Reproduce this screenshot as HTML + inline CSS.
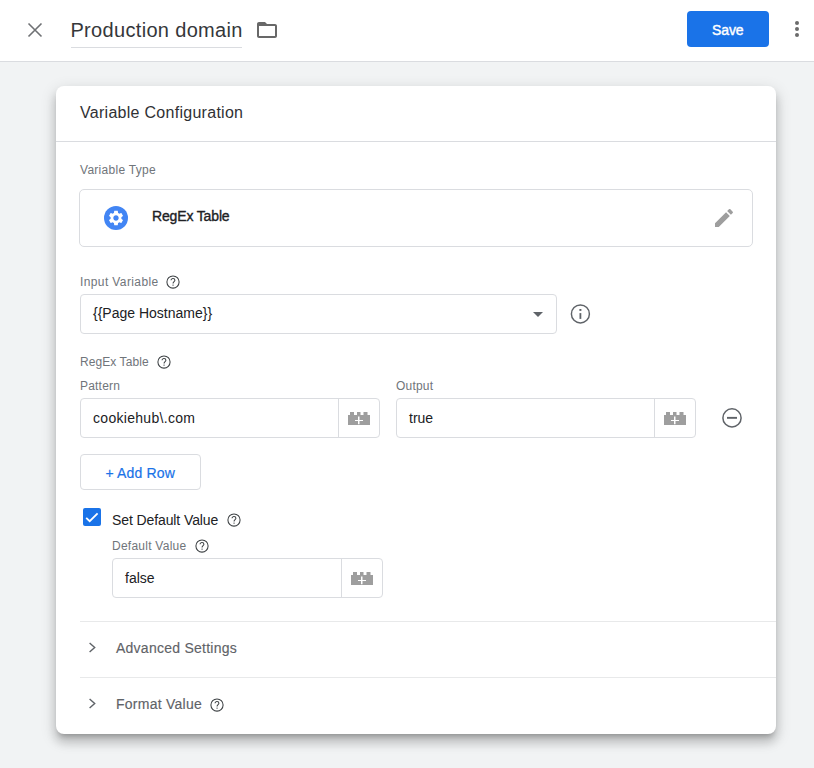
<!DOCTYPE html>
<html><head><meta charset="utf-8">
<style>
*{box-sizing:border-box;margin:0;padding:0}
html,body{width:814px;height:768px;overflow:hidden;background:#f1f3f4;font-family:"Liberation Sans",sans-serif;color:#202124}
.abs{position:absolute}
#hdr{position:absolute;left:0;top:0;width:814px;height:62px;background:#fff;border-bottom:1px solid #dadce0}
#card{position:absolute;left:56px;top:86px;width:720px;height:648px;background:#fff;border-radius:8px;box-shadow:0 5px 5px -3px rgba(0,0,0,.22),0 8px 10px 1px rgba(0,0,0,.14),0 5px 15px 2px rgba(0,0,0,.12)}
.t{position:absolute;white-space:nowrap}
.s12{font-size:12px;line-height:12px}
.s14{font-size:14px;line-height:14px}
.s16{font-size:16px;line-height:16px}
.s20{font-size:20px;line-height:20px}
.lbl{color:#70757a;letter-spacing:0.2px}
.box{position:absolute;border:1px solid #dadce0;border-radius:4px;background:#fff}
.div{position:absolute;top:0;width:1px;height:100%;background:#dadce0}
.hline{position:absolute;height:1px;background:#e8e9ea}
svg{position:absolute;display:block}
</style></head><body>
<div id="hdr">
  <svg style="left:23px;top:18px" width="24" height="24" viewBox="0 0 24 24"><path d="M5.5 5.5L18.5 18.5M18.5 5.5L5.5 18.5" stroke="#6f7174" stroke-width="1.6" fill="none"/></svg>
  <div class="t s20" style="left:70.4px;top:20px;letter-spacing:0.33px;color:#35373a">Production domain</div>
  <div class="abs" style="left:71px;top:47px;width:171px;height:1px;background:#dadce0"></div>
  <svg style="left:255px;top:18px" width="24" height="24" viewBox="0 0 24 24"><path fill-rule="evenodd" fill="#686868" d="M10 4H4c-1.1 0-2 .9-2 2v12c0 1.1.9 2 2 2h16c1.1 0 2-.9 2-2V8c0-1.1-.9-2-2-2h-8l-2-2zM4 8h16v10H4z"/></svg>
  <div class="abs" style="left:687px;top:11px;width:82px;height:36px;background:#1a73e8;border-radius:4px"></div>
  <div class="t s14" style="left:712px;top:23px;color:#fff;-webkit-text-stroke:0.4px #fff;letter-spacing:-0.1px">Save</div>
  <svg style="left:785px;top:17px" width="24" height="24" viewBox="0 0 24 24"><circle cx="12" cy="6" r="2" fill="#6b6b6b"/><circle cx="12" cy="12" r="2" fill="#6b6b6b"/><circle cx="12" cy="18" r="2" fill="#6b6b6b"/></svg>
</div>

<div id="card">
  <div class="t s16" style="left:24px;top:19px;letter-spacing:0.28px;color:#303134">Variable Configuration</div>
  <div class="hline" style="left:0;top:55px;width:720px;background:#dadce0"></div>

  <div class="t s12 lbl" style="left:24px;top:78px;letter-spacing:0.28px">Variable Type</div>
  <div class="box" style="left:23px;top:103px;width:674px;height:58px;border-radius:5px"></div>
  <svg style="left:48px;top:120px" width="24" height="24" viewBox="0 0 24 24"><circle cx="12" cy="12" r="12" fill="#4285f4"/><g transform="translate(3 3) scale(0.75)"><path fill="#fff" d="M19.14 12.94c.04-.3.06-.61.06-.94 0-.32-.02-.64-.07-.94l2.03-1.58c.18-.14.23-.41.12-.61l-1.92-3.32c-.12-.22-.37-.29-.59-.22l-2.39.96c-.5-.38-1.03-.7-1.62-.94l-.36-2.54c-.04-.24-.24-.41-.48-.41h-3.84c-.24 0-.43.17-.47.41l-.36 2.54c-.59.24-1.13.57-1.62.94l-2.39-.96c-.22-.08-.47 0-.59.22L2.74 8.87c-.12.21-.08.47.12.61l2.03 1.58c-.05.3-.09.63-.09.94s.02.64.07.94l-2.03 1.58c-.18.14-.23.41-.12.61l1.92 3.32c.12.22.37.29.59.22l2.39-.96c.5.38 1.03.7 1.62.94l.36 2.54c.05.24.24.41.48.41h3.84c.24 0 .44-.17.47-.41l.36-2.54c.59-.24 1.13-.56 1.62-.94l2.39.96c.22.08.47 0 .59-.22l1.92-3.32c.12-.22.07-.47-.12-.61l-2.01-1.58zM12 15.6c-1.98 0-3.6-1.62-3.6-3.6s1.62-3.6 3.6-3.6 3.6 1.62 3.6 3.6-1.62 3.6-3.6 3.6z"/></g></svg>
  <div class="t s14" style="left:96px;top:123px;-webkit-text-stroke:0.35px #202124;letter-spacing:-0.15px">RegEx Table</div>
  <svg style="left:656px;top:120px" width="24" height="24" viewBox="0 0 24 24"><path fill="#9e9e9e" d="M3 17.25V21h3.75L17.81 9.94l-3.75-3.75L3 17.25zM20.71 7.04c.39-.39.39-1.02 0-1.41l-2.34-2.34c-.39-.39-1.020-.39-1.41 0l-1.83 1.83 3.75 3.75 1.83-1.83z"/></svg>

  <div class="t s12 lbl" style="left:24px;top:190px;letter-spacing:0.39px">Input Variable</div>
  <svg style="left:109px;top:188px" width="16" height="16" viewBox="0 0 16 16"><circle cx="8" cy="8" r="6.1" stroke="#3c4043" stroke-width="1.05" fill="none"/><path d="M6.05 6.3c0-1 .85-1.75 1.95-1.75s1.9.75 1.9 1.7c0 1.3-1.85 1.4-1.85 3.2" stroke="#3c4043" stroke-width="1.05" fill="none"/><rect x="7.5" y="10.6" width="1.1" height="1.1" fill="#3c4043"/></svg>
  <div class="box" style="left:24px;top:208px;width:477px;height:40px"></div>
  <div class="t s14" style="left:37px;top:220px">{{Page Hostname}}</div>
  <svg style="left:477px;top:226px" width="10" height="5" viewBox="0 0 10 5"><path d="M0 0h10L5 5z" fill="#5f6368"/></svg>
  <svg style="left:512px;top:216px" width="24" height="24" viewBox="0 0 24 24"><circle cx="12.4" cy="11.9" r="9.0" stroke="#5f6368" stroke-width="1.45" fill="none"/><rect x="11.4" y="7" width="2" height="1.9" fill="#5f6368"/><rect x="11.5" y="11.1" width="1.8" height="5.8" fill="#5f6368"/></svg>

  <div class="t s12 lbl" style="left:24px;top:270px;letter-spacing:0.08px">RegEx Table</div>
  <svg style="left:99.5px;top:268px" width="16" height="16" viewBox="0 0 16 16"><circle cx="8" cy="8" r="6.1" stroke="#3c4043" stroke-width="1.05" fill="none"/><path d="M6.05 6.3c0-1 .85-1.75 1.95-1.75s1.9.75 1.9 1.7c0 1.3-1.85 1.4-1.85 3.2" stroke="#3c4043" stroke-width="1.05" fill="none"/><rect x="7.5" y="10.6" width="1.1" height="1.1" fill="#3c4043"/></svg>

  <div class="t s12 lbl" style="left:24px;top:294px">Pattern</div>
  <div class="t s12 lbl" style="left:340px;top:294px">Output</div>

  <div class="box" style="left:24px;top:312px;width:300px;height:40px"><div class="div" style="left:257px"></div></div>
  <div class="t s14" style="left:37px;top:325px;letter-spacing:0.3px">cookiehub\.com</div>
  <svg style="left:292px;top:326px" width="23" height="13" viewBox="0 0 23 13"><path fill="#9e9e9e" d="M0 3h22v10H0zM2 0h4v3H2zM9 0h3.5v3H9zM15.5 0h4v3h-4z"/><path fill="#fff" d="M7 8h8v1H7zM10 4.5h1.5v7.7H10z"/></svg>

  <div class="box" style="left:340px;top:312px;width:300px;height:40px"><div class="div" style="left:257px"></div></div>
  <div class="t s14" style="left:353px;top:325px">true</div>
  <svg style="left:608px;top:326px" width="23" height="13" viewBox="0 0 23 13"><path fill="#9e9e9e" d="M0 3h22v10H0zM2 0h4v3H2zM9 0h3.5v3H9zM15.5 0h4v3h-4z"/><path fill="#fff" d="M7 8h8v1H7zM10 4.5h1.5v7.7H10z"/></svg>
  <svg style="left:664px;top:320px" width="24" height="24" viewBox="0 0 24 24"><circle cx="12" cy="11.9" r="9.1" stroke="#5f6368" stroke-width="1.5" fill="none"/><rect x="7" y="10.9" width="10" height="1.9" fill="#5f6368"/></svg>

  <div class="box" style="left:24px;top:368px;width:121px;height:36px"></div>
  <div class="t s14" style="left:49.5px;top:380px;color:#1a73e8;letter-spacing:0.15px;-webkit-text-stroke:0.2px #1a73e8">+ Add Row</div>

  <div class="abs" style="left:27px;top:422px;width:18px;height:18px;background:#1a73e8;border-radius:2px"></div>
  <svg style="left:27px;top:422px" width="18" height="18" viewBox="0 0 18 18"><path d="M3.2 9.8L6.7 13.2L14.6 5.3" stroke="#fff" stroke-width="1.8" fill="none"/></svg>
  <div class="t s14" style="left:56px;top:426.6px;letter-spacing:-0.1px">Set Default Value</div>
  <svg style="left:170px;top:426px" width="16" height="16" viewBox="0 0 16 16"><circle cx="8" cy="8" r="6.1" stroke="#3c4043" stroke-width="1.05" fill="none"/><path d="M6.05 6.3c0-1 .85-1.75 1.95-1.75s1.9.75 1.9 1.7c0 1.3-1.85 1.4-1.85 3.2" stroke="#3c4043" stroke-width="1.05" fill="none"/><rect x="7.5" y="10.6" width="1.1" height="1.1" fill="#3c4043"/></svg>

  <div class="t s12 lbl" style="left:56px;top:454px;letter-spacing:0.25px">Default Value</div>
  <svg style="left:138px;top:452px" width="16" height="16" viewBox="0 0 16 16"><circle cx="8" cy="8" r="6.1" stroke="#3c4043" stroke-width="1.05" fill="none"/><path d="M6.05 6.3c0-1 .85-1.75 1.95-1.75s1.9.75 1.9 1.7c0 1.3-1.85 1.4-1.85 3.2" stroke="#3c4043" stroke-width="1.05" fill="none"/><rect x="7.5" y="10.6" width="1.1" height="1.1" fill="#3c4043"/></svg>
  <div class="box" style="left:56px;top:472px;width:271px;height:40px"><div class="div" style="left:228px"></div></div>
  <div class="t s14" style="left:69px;top:485px">false</div>
  <svg style="left:295px;top:486px" width="23" height="13" viewBox="0 0 23 13"><path fill="#9e9e9e" d="M0 3h22v10H0zM2 0h4v3H2zM9 0h3.5v3H9zM15.5 0h4v3h-4z"/><path fill="#fff" d="M7 8h8v1H7zM10 4.5h1.5v7.7H10z"/></svg>

  <div class="hline" style="left:24px;top:535px;width:696px"></div>
  <svg style="left:26px;top:551px" width="20" height="20" viewBox="0 0 20 20"><path d="M7.6 5.9L12.7 10.4L7.6 14.9" stroke="#5f6368" stroke-width="1.4" fill="none"/></svg>
  <div class="t s14" style="left:60px;top:555px;color:#5f6368;letter-spacing:0.25px;-webkit-text-stroke:0.15px #5f6368">Advanced Settings</div>
  <div class="hline" style="left:24px;top:591px;width:696px"></div>
  <svg style="left:26px;top:607px" width="20" height="20" viewBox="0 0 20 20"><path d="M7.6 5.9L12.7 10.4L7.6 14.9" stroke="#5f6368" stroke-width="1.4" fill="none"/></svg>
  <div class="t s14" style="left:60px;top:611px;color:#5f6368;letter-spacing:0.25px;-webkit-text-stroke:0.15px #5f6368">Format Value</div>
  <svg style="left:153px;top:611px" width="16" height="16" viewBox="0 0 16 16"><circle cx="8" cy="8" r="6.1" stroke="#3c4043" stroke-width="1.05" fill="none"/><path d="M6.05 6.3c0-1 .85-1.75 1.95-1.75s1.9.75 1.9 1.7c0 1.3-1.85 1.4-1.85 3.2" stroke="#3c4043" stroke-width="1.05" fill="none"/><rect x="7.5" y="10.6" width="1.1" height="1.1" fill="#3c4043"/></svg>
</div>
</body></html>
